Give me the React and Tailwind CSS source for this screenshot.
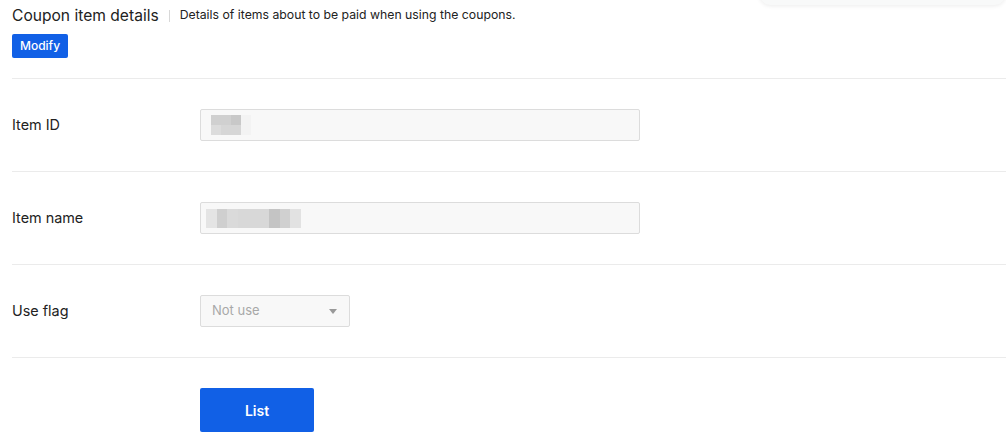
import React from 'react'

const font = { fontFamily: 'Inter, "Noto Sans", sans-serif' }

function Blur({ blocks, rowClass }) {
  return (
    <div className="flex">
      {blocks.map((b, i) => (
        <span key={i} className={`${rowClass} ${b}`} />
      ))}
    </div>
  )
}

function Row({ label, children }) {
  return (
    <div className="flex items-center h-[93px] border-b border-[#ebebeb]">
      <div className="w-[188px] text-[14.4px] text-[#222] -mt-[1px]">{label}</div>
      {children}
    </div>
  )
}

export default function App() {
  return (
    <div className="relative w-[1006px] h-[443px] bg-white overflow-hidden" style={font}>
      <div className="absolute right-0 -top-[30px] w-[247px] h-[35px] rounded-xl bg-[#f8f9f9] shadow-[0_1px_4px_rgba(0,0,0,0.08)]" />

      <div className="pl-3">
        <div className="flex items-center pt-[5px] h-[26px]">
          <h1 className="text-[15.6px] text-[#222] leading-none">Coupon item details</h1>
          <span className="mx-[10px] h-[12px] w-px bg-[#d8d8d8]" />
          <p className="text-[12.25px] text-[#222] leading-none">
            Details of items about to be paid when using the coupons.
          </p>
        </div>
        <button className="mt-[8px] h-[24px] w-[56px] rounded-[2px] bg-[#1160e6] text-white text-[12px] font-medium leading-none">
          Modify
        </button>
        <div className="mt-[20px] border-b border-[#ebebeb]" />

        <Row label="Item ID">
          <div className="w-[440px] h-[32px] border border-[#dcdcdc] bg-[#f8f8f8] rounded-[2px] flex flex-col justify-center pl-[10px]">
            <Blur rowClass="w-[10px] h-[10px]" blocks={['bg-[#d0d0d0]', 'bg-[#d0d0d0]', 'bg-[#c8c8c8]', 'bg-[#f3f3f3]']} />
            <Blur rowClass="w-[10px] h-[10px]" blocks={['bg-[#dcdcdc]', 'bg-[#d6d6d6]', 'bg-[#d6d6d6]', 'bg-[#f3f3f3]']} />
          </div>
        </Row>

        <Row label="Item name">
          <div className="w-[440px] h-[32px] border border-[#dcdcdc] bg-[#f8f8f8] rounded-[2px] flex items-center pl-[5px]">
            <div className="flex h-[19px]">
              <span className="w-[11px] bg-[#e4e4e4]" />
              <span className="w-[10px] bg-[#cfcfcf]" />
              <span className="w-[11px] bg-[#dadada]" />
              <span className="w-[31px] bg-[#d8d8d8]" />
              <span className="w-[11px] bg-[#c4c4c4]" />
              <span className="w-[10px] bg-[#d0d0d0]" />
              <span className="w-[11px] bg-[#e2e2e2]" />
            </div>
          </div>
        </Row>

        <Row label="Use flag">
          <div className="w-[150px] h-[32px] border border-[#dcdcdc] bg-[#f8f8f8] rounded-[2px] flex items-center justify-between pl-[11px] pr-[12px]">
            <span className="text-[13px] text-[#a8a8a8]">Not use</span>
            <svg width="8" height="5" viewBox="0 0 8 5">
              <path d="M0 0h8L4 5z" fill="#999" />
            </svg>
          </div>
        </Row>

        <div className="pl-[188px] pt-[30px]">
          <button className="w-[114px] h-[44px] rounded-[2px] bg-[#1160e6] text-white text-[14px] font-semibold">
            List
          </button>
        </div>
      </div>
    </div>
  )
}
